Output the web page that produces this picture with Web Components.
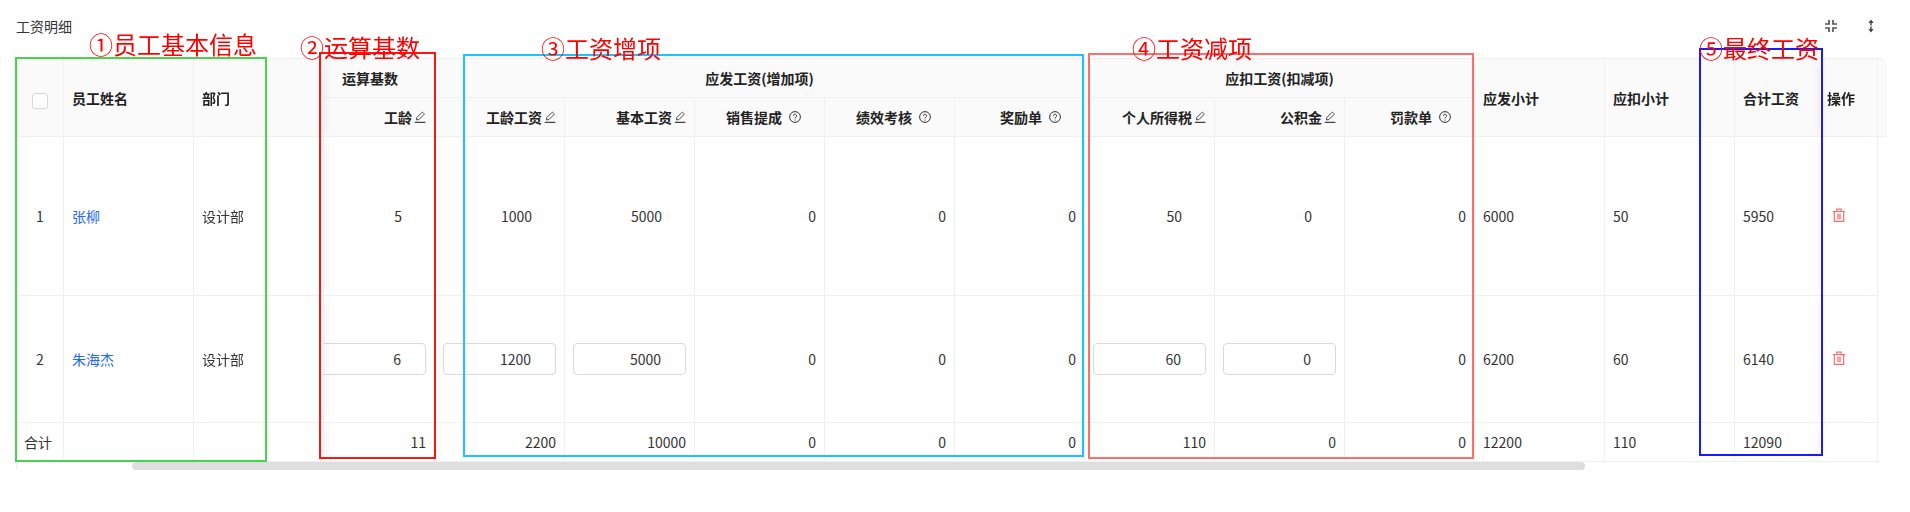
<!DOCTYPE html>
<html lang="zh-CN">
<head>
<meta charset="utf-8">
<title>工资明细</title>
<style>
  html, body { margin: 0; background: #fff; }
  body { font: 14px "Noto Sans CJK SC", sans-serif; color: #333; }
</style>
</head>
<body>
<salary-page>
  <span slot="title">工资明细</span>
  <ui-icon slot="tools" name="compress"></ui-icon>
  <ui-icon slot="tools" name="sort"></ui-icon>
  <salary-table></salary-table>
  <note-box style="--x:15px;--y:57px;--w:252px;--h:405px;--c:#4ad34f;--lx:72px;--ly:-25px">①员工基本信息</note-box>
  <note-box style="--x:319px;--y:52px;--w:117px;--h:407px;--c:#ff1414;--lx:-21px;--ly:-17px">②运算基数</note-box>
  <note-box style="--x:463px;--y:54px;--w:621px;--h:403px;--c:#1cc4ff;--lx:76px;--ly:-18px">③工资增项</note-box>
  <note-box style="--x:1088px;--y:53px;--w:386px;--h:406px;--c:#ff6f6a;--lx:42px;--ly:-17px">④工资减项</note-box>
  <note-box style="--x:1699px;--y:48px;--w:124px;--h:408px;--c:#1a1aff;--lx:-2px;--ly:-12px">⑤最终工资</note-box>
</salary-page>

<script>
// icons used by the toolbar and by the table
const ICONS = {
  compress: '<path d="M5 1v4H1M9 1v4h4M1 9h4v4M13 9H9v4" fill="none" stroke="#555" stroke-width="1.7"/>',
  sort: '<path d="M7 .5 4.4 4h1.9v2.4h1.4V4h1.9zM7 13.5 4.4 10h1.9V7.6h1.4V10h1.9z" fill="#444"/>',
  pen: '<path d="M2.4 8.9l.4-2.4 5-5a.8.8 0 0 1 1.1 0l1 1a.8.8 0 0 1 0 1.1l-5 5z" fill="none" stroke="#444"/><path d="M.8 11.4h10.6" stroke="#444" stroke-width="1.1"/>',
  help: '<circle cx="6" cy="6" r="5.4" fill="none" stroke="#333"/><path d="M4.4 4.8a1.6 1.6 0 1 1 2.5 1.3c-.6.4-.9.7-.9 1.4" fill="none" stroke="#333"/><circle cx="6" cy="9" r=".6" fill="#333"/>',
  trash: '<path d="M.8 3.5h12.4M4.8 3.2V1.2h4.4v2M2.3 3.5v9.8h9.4V3.5" fill="none" stroke="#ff6b6b" stroke-width="1.2"/><rect x="5" y="5.6" width="4" height="5.6" fill="#ff9c9c"/>'
};
const ICON_BOX = { compress: 14, sort: 14, pen: 12, help: 12, trash: 14 };

class UiIcon extends HTMLElement {
  connectedCallback() {
    const name = this.getAttribute("name");
    const size = ICON_BOX[name];
    this.attachShadow({ mode: "open" }).innerHTML = `
      <style>
        :host { display: inline-flex; flex: none; }
        svg { display: block; }
      </style>
      <svg width="${size}" height="${size}" viewBox="0 0 ${size} ${size}">${ICONS[name]}</svg>`;
  }
}
customElements.define("ui-icon", UiIcon);

// the editable cell of the second row
class NumBox extends HTMLElement {
  constructor() {
    super();
    this.attachShadow({ mode: "open" }).innerHTML = `
      <style>
        :host {
          display: block;
          box-sizing: border-box;
          width: 113px;
          height: 32px;
          padding-right: 24px;
          border: 1px solid #d9d9d9;
          border-radius: 4px;
          background: #fff;
          line-height: 30px;
          text-align: right;
        }
      </style>
      <slot></slot>`;
  }
}
customElements.define("num-box", NumBox);

// coloured frame drawn over the table, with its red caption
class NoteBox extends HTMLElement {
  constructor() {
    super();
    this.attachShadow({ mode: "open" }).innerHTML = `
      <style>
        :host {
          position: absolute;
          z-index: 5;
          left: var(--x);
          top: var(--y);
          width: var(--w);
          height: var(--h);
          box-sizing: border-box;
          border: 2px solid var(--c);
          pointer-events: none;
        }
        span {
          position: absolute;
          left: var(--lx);
          top: var(--ly);
          color: #ff0000;
          font: 400 24px/24px "DejaVu Serif", "Noto Sans CJK SC", serif;
          white-space: nowrap;
        }
      </style>
      <span><slot></slot></span>`;
  }
}
customElements.define("note-box", NoteBox);

class SalaryPage extends HTMLElement {
  constructor() {
    super();
    this.attachShadow({ mode: "open" }).innerHTML = `
      <style>
        :host {
          display: block;
          position: relative;
          padding: 0 23px 0 16px;
          height: 512px;
          box-sizing: border-box;
          overflow: hidden;
        }
        header {
          display: flex;
          align-items: center;
          justify-content: space-between;
          height: 52px;
          margin-bottom: 6px;
          color: #333;
        }
        .tools {
          display: flex;
          gap: 26px;
          padding-right: 9px;
        }
      </style>
      <header>
        <slot name="title"></slot>
        <div class="tools"><slot name="tools"></slot></div>
      </header>
      <slot></slot>`;
  }
}
customElements.define("salary-page", SalaryPage);

const COLS = [47, 130, 130, 130, 130, 130, 130, 130, 130, 130, 130, 130, 130, 130, 130, 130, 329, 58];

const ROWS = [
  { h: 159, no: 1, name: "张柳", dept: "设计部", vals: [5, 1000, 5000, 0, 0, 0, 50, 0, 0], sum: [6000, 50, 5950] },
  { h: 127, no: 2, name: "朱海杰", dept: "设计部", vals: [6, 1200, 5000, 0, 0, 0, 60, 0, 0], sum: [6200, 60, 6140], edit: true }
];
const TOTAL = [11, 2200, 10000, 0, 0, 0, 110, 0, 0];
const TOTAL_SUM = [12200, 110, 12090];
// columns of vals that are editable in row 2 (salary columns 工龄 .. 公积金)
const EDITABLE = [0, 1, 2, 6, 7];

function headCell(text, icon) {
  const cls = icon === "help" ? "r wide" : "r";
  return `<th class="${cls}"><span class="hc">${text}<ui-icon name="${icon}"></ui-icon></span></th>`;
}

function valueCells(row) {
  return row.vals.map((v, i) => {
    if (EDITABLE.includes(i)) {
      const first = i === 0 ? " clip" : "";
      const inner = row.edit ? `<num-box>${v}</num-box>` : `<span class="plain">${v}</span>`;
      return `<td class="r${first}"><div class="end">${inner}</div></td>`;
    }
    return `<td class="r">${v}</td>`;
  }).join("");
}

class SalaryTable extends HTMLElement {
  connectedCallback() {
    this.attachShadow({ mode: "open" });
    this.render();
    // same horizontal scroll position as the screen: the first data column is off to the left
    const scroll = this.shadowRoot.querySelector(".scroll");
    scroll.scrollLeft = 149;
    this.syncThumb(scroll);
  }

  // the rail is our own element: native bars may be hidden by the browser
  syncThumb(scroll) {
    const thumb = this.shadowRoot.querySelector(".thumb");
    const k = scroll.clientWidth / scroll.scrollWidth;
    thumb.style.marginLeft = scroll.scrollLeft * k + "px";
    thumb.style.width = scroll.clientWidth * k + "px";
  }

  render() {
    const width = COLS.reduce((a, b) => a + b, 0);
    const body = ROWS.map(row => `
      <tr style="height:${row.h}px">
        <td class="c fix0">${row.no}</td>
        <td class="fix1"><a>${row.name}</a></td>
        <td class="fix2">${row.dept}</td>
        <td></td>
        ${valueCells(row)}
        ${row.sum.map(v => `<td>${v}</td>`).join("")}
        <td></td>
        <td class="fixr"><ui-icon name="trash"></ui-icon></td>
      </tr>`).join("");

    this.shadowRoot.innerHTML = `
      <style>
        :host {
          display: grid;
          grid-template-columns: minmax(0, 1fr) 9px;
          align-items: start;
        }
        .scroll {
          overflow-x: auto;
          overflow-y: hidden;
          scrollbar-width: none;
          border-left: 1px solid #f0f0f0;
          border-top: 1px solid #f0f0f0;
          border-top-left-radius: 8px;
        }
        .gutter {
          box-sizing: border-box;
          height: 79px;
          background: #fafafa;
          border-top: 1px solid #f0f0f0;
          border-top-right-radius: 8px;
          border-bottom: 1px solid #f0f0f0;
        }
        .rail {
          grid-column: 1;
          height: 8px;
          box-shadow: inset 1px 0 0 #f0f0f0;
        }
        .thumb {
          height: 8px;
          background: #dedede;
          border-radius: 4px;
        }
        table {
          table-layout: fixed;
          width: ${width}px;
          border-collapse: separate;
          border-spacing: 0;
          font-size: 14px;
          line-height: 20px;
          color: #333;
        }
        th, td {
          box-sizing: border-box;
          padding: 0 8px;
          border-right: 1px solid #f0f0f0;
          border-bottom: 1px solid #f0f0f0;
          text-align: left;
          background: #fff;
          white-space: nowrap;
        }
        th { background: #fafafa; font-weight: 600; color: #222; }
        th.g, th.c, td.c { text-align: center; }
        th.g { padding: 0; }
        .r { text-align: right; }
        th.wide { padding-right: 23px; }
        th.nb, td.nb { border-right: 0; }
        .hc { display: inline-flex; align-items: center; gap: 2px; }
        th.wide .hc { gap: 7px; }
        a { color: #2468f2; }
        .end { display: flex; justify-content: flex-end; }
        .plain { padding-right: 24px; }
        td.clip { overflow: hidden; }
        .fix0, .fix1, .fix2, .fixr { position: sticky; z-index: 2; }
        .fix0 { left: 0; }
        .fix1 { left: 47px; }
        .fix2 { left: 177px; box-shadow: 6px 0 7px -4px rgba(0, 0, 0, .05); }
        .fixr { right: 0; box-shadow: -6px 0 7px -4px rgba(0, 0, 0, .05); padding: 0 7px; }
        td.fixr { padding-left: 12px; }
        td.fixr ui-icon { display: block; margin-top: -2px; }
        .num td { text-align: right; }
        .num td.l { text-align: left; }
        .num td.first { padding-left: 7px; }
        .check {
          display: inline-block;
          box-sizing: border-box;
          width: 16px;
          height: 16px;
          margin-top: 6px;
          border: 1px solid #d9d9d9;
          border-radius: 3px;
          background: #fff;
          vertical-align: middle;
        }
      </style>
      <div class="scroll">
        <table>
          <colgroup>${COLS.map(w => `<col style="width:${w}px">`).join("")}</colgroup>
          <thead>
            <tr style="height:39px">
              <th rowspan="2" class="c fix0"><span class="check"></span></th>
              <th rowspan="2" class="fix1">员工姓名</th>
              <th rowspan="2" class="fix2">部门</th>
              <th rowspan="2"></th>
              <th class="g nb">运算基数</th>
              <th class="g" colspan="5">应发工资(增加项)</th>
              <th class="g" colspan="3">应扣工资(扣减项)</th>
              <th rowspan="2">应发小计</th>
              <th rowspan="2">应扣小计</th>
              <th rowspan="2">合计工资</th>
              <th rowspan="2"></th>
              <th rowspan="2" class="fixr">操作</th>
            </tr>
            <tr style="height:39px">
              ${headCell("工龄", "pen")}
              ${headCell("工龄工资", "pen")}
              ${headCell("基本工资", "pen")}
              ${headCell("销售提成", "help")}
              ${headCell("绩效考核", "help")}
              ${headCell("奖励单", "help")}
              ${headCell("个人所得税", "pen")}
              ${headCell("公积金", "pen")}
              ${headCell("罚款单", "help")}
            </tr>
          </thead>
          <tbody>${body}</tbody>
          <tfoot>
            <tr class="num" style="height:39px">
              <td class="l first fix0">合计</td>
              <td class="fix1"></td>
              <td class="fix2"></td>
              <td></td>
              ${TOTAL.map(v => `<td>${v}</td>`).join("")}
              ${TOTAL_SUM.map(v => `<td class="l">${v}</td>`).join("")}
              <td></td>
              <td class="fixr"></td>
            </tr>
          </tfoot>
        </table>
      </div>
      <div class="gutter"></div>
      <div class="rail"><div class="thumb"></div></div>`;
  }
}
customElements.define("salary-table", SalaryTable);
</script>
</body>
</html>
